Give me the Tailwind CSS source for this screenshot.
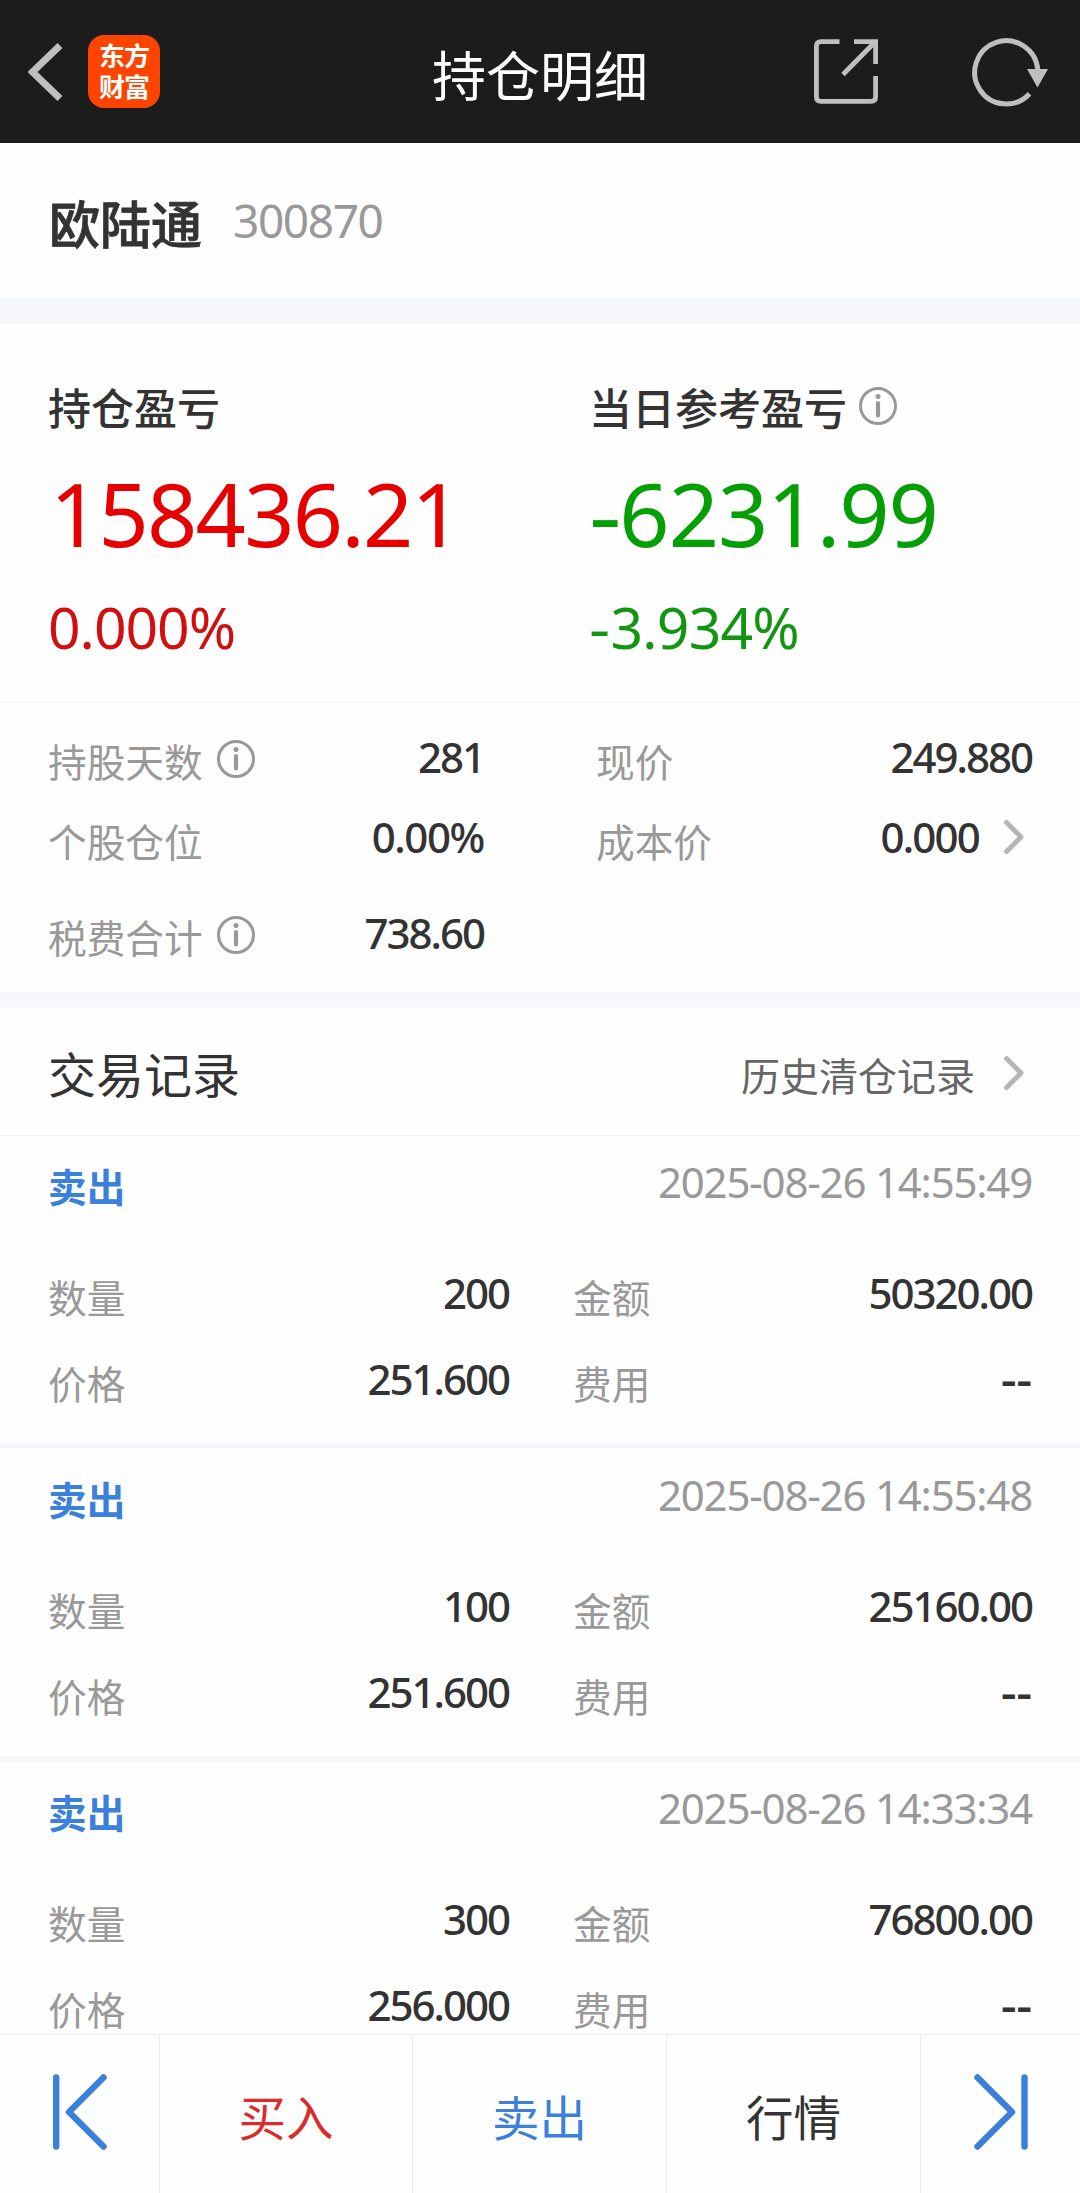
<!DOCTYPE html>
<html lang="zh-CN">
<head>
  <meta charset="UTF-8" />
  <meta name="viewport" content="width=device-width, initial-scale=1.0" />
  <title>持仓明细</title>
  <script src="https://cdn.jsdelivr.net/npm/@tailwindcss/browser@4"></script>
</head>
<body class="bg-[#fefefe] h-[2193px] flex flex-col overflow-hidden text-[#333333] font-['Noto_Sans_CJK_SC',sans-serif] leading-none">

  <!-- shared icons -->
  <svg class="hidden">
    <symbol id="info" viewBox="0 0 38 38">
      <circle cx="19" cy="19" r="17.5" fill="none" stroke="#999999" stroke-width="3" />
      <circle cx="19" cy="9.4" r="2.5" fill="#999999" />
      <path d="M19 16v12.5" stroke="#999999" stroke-width="4.2" stroke-linecap="round" />
    </symbol>
    <symbol id="arrow" viewBox="0 0 20 34">
      <path d="M2.6 2.6L17 17L2.6 31.4" fill="none" stroke="#b5b5b5" stroke-width="5" stroke-linecap="round" stroke-linejoin="round" />
    </symbol>
  </svg>

  <!-- top bar -->
  <header class="bg-[#1c1c1c] h-[143px] shrink-0 grid grid-cols-[1fr_auto_1fr] items-center pl-7 pr-8">
    <div class="flex items-center">
      <svg class="w-9 h-[58px]" viewBox="0 0 36 58"><path d="M32 2.5L4.5 29L32 55.5" fill="none" stroke="#bfbfbf" stroke-width="7" stroke-linejoin="miter" /></svg>
      <div class="ml-6 w-[72px] h-[73px] rounded-2xl bg-[#ff4400] text-white text-[26px] font-bold leading-[31px] text-center pt-[4px] tracking-[-1px]">东方<br>财富</div>
    </div>
    <h1 class="text-white text-[54px] pt-[5px] pl-[4px]">持仓明细</h1>
    <div class="flex items-center justify-end">
      <svg class="w-16 h-[65px] mr-[94px]" viewBox="0 0 64 65" fill="none" stroke="#bfbfbf" stroke-width="4.8">
        <path d="M25.5 2.7H7Q2.4 2.7 2.4 7V58Q2.4 62.3 7 62.3H57Q61.6 62.3 61.6 58V37" />
        <path d="M40 2.7H61.6V25M61 3L29 35.5" />
      </svg>
      <svg class="w-[76px] h-[70px]" viewBox="0 0 76 70">
        <path d="M57.5 56.8A31.6 31.6 0 1 1 65.8 33" fill="none" stroke="#bfbfbf" stroke-width="5" />
        <path d="M55 32H76L65.5 50.5Z" fill="#bfbfbf" />
      </svg>
    </div>
  </header>

  <!-- stock name -->
  <section class="h-[155px] shrink-0 flex items-center px-[49px]">
    <h2 class="text-[51px] font-medium pt-[3px] [-webkit-text-stroke:0.8px]">欧陆通</h2>
    <span class="ml-[31px] text-[46px] text-[#999999] font-['Noto_Sans',sans-serif] tracking-[-1.4px] pb-[1px]">300870</span>
  </section>
  <div class="h-[26px] shrink-0 bg-[#f6f7fa]"></div>

  <!-- profit and loss -->
  <section class="h-[379px] shrink-0 grid grid-cols-2 pl-[48px] border-b border-[#f5f5f5]">
    <div class="pt-[60px]">
      <div class="h-[44px] flex items-center text-[43px] font-medium">持仓盈亏</div>
      <div class="mt-[41px] pl-[2px] text-[88px] text-[#e60000] font-['Noto_Sans',sans-serif] tracking-[-1.8px]">158436.21</div>
      <div class="mt-[42px] text-[57px] text-[#d20f0f] font-['Noto_Sans',sans-serif] tracking-[-1px]">0.000%</div>
    </div>
    <div class="pt-[60px] pl-[25px]">
      <div class="h-[44px] flex items-center text-[43px] font-medium">当日参考盈亏
        <svg class="w-[38px] h-[38px] ml-3"><use href="#info" /></svg>
      </div>
      <div class="mt-[41px] text-[88px] text-[#049f04] font-['Noto_Sans',sans-serif] tracking-[-1px]"><span class="inline-block origin-left scale-x-115 mr-[3px]">-</span>6231.99</div>
      <div class="mt-[42px] text-[57px] text-[#129612] font-['Noto_Sans',sans-serif] tracking-[-0.8px]"><span class="inline-block origin-left scale-x-115 mr-[4px]">-</span>3.934%</div>
    </div>
  </section>

  <!-- position details -->
  <section class="h-[288px] shrink-0 pt-4 pl-[48px] pr-[48px] grid grid-cols-[436px_1fr] grid-rows-[82px_78px_112px] gap-x-28 text-[38.7px] text-[#999999]">
    <div class="flex items-center">
      <span>持股天数</span>
      <svg class="w-[38px] h-[38px] ml-[14px] mb-[2px]"><use href="#info" /></svg>
      <span class="ml-auto pb-1.5 text-[42px] text-[#333333] font-medium font-['Noto_Sans',sans-serif] tracking-[-2px]">281</span>
    </div>
    <div class="flex items-center justify-between">
      <span>现价</span>
      <span class="pb-1.5 text-[42px] text-[#333333] font-medium font-['Noto_Sans',sans-serif] tracking-[-2px]">249.880</span>
    </div>
    <div class="flex items-center justify-between">
      <span>个股仓位</span>
      <span class="pb-1.5 text-[42px] text-[#333333] font-medium font-['Noto_Sans',sans-serif] tracking-[-1.4px]">0.00%</span>
    </div>
    <div class="flex items-center">
      <span>成本价</span>
      <span class="ml-auto pb-1.5 text-[42px] text-[#333333] font-medium font-['Noto_Sans',sans-serif] tracking-[-1.8px]">0.000</span>
      <svg class="w-5 h-[34px] ml-[25px] mr-[8px] mb-[7px]"><use href="#arrow" /></svg>
    </div>
    <div class="flex items-center">
      <span class="pt-[2px]">税费合计</span>
      <svg class="w-[38px] h-[38px] ml-[14px]"><use href="#info" /></svg>
      <span class="ml-auto pb-1 text-[42px] text-[#333333] font-medium font-['Noto_Sans',sans-serif] tracking-[-2px]">738.60</span>
    </div>
  </section>
  <div class="h-4 shrink-0 bg-[#f6f7fa]"></div>

  <!-- trade records -->
  <div class="h-[129px] shrink-0 flex items-center pl-[48px] pr-[56px] border-b border-[#f5f5f5]">
    <h3 class="text-[48px] pt-[2px]">交易记录</h3>
    <span class="ml-auto text-[39px] text-[#666666] pt-[6px]">历史清仓记录</span>
    <svg class="w-5 h-[34px] ml-[29px] mt-[3px]"><use href="#arrow" /></svg>
  </div>

  <main class="flex-1 min-h-0 overflow-hidden">
    <article class="h-[313px] border-b-6 border-[#f6f7fa]">
      <div class="h-[97px] flex items-center justify-between pl-[48px] pr-[48px] border-b border-[#f7f7f7]">
        <span class="text-[38.7px] font-bold text-[#3b80da] pt-[3px]">卖出</span>
        <span class="text-[42px] text-[#999999] font-['Noto_Sans',sans-serif] tracking-[-1.2px] pb-[4px]">2025-08-26 14:55:49</span>
      </div>
      <div class="pt-[20px] pl-[48px] pr-[48px] grid grid-cols-[461px_1fr] auto-rows-[86px] gap-x-[64px] text-[38.7px] text-[#999999]">
        <div class="flex items-center justify-between">数量<span class="pb-1.5 text-[42px] text-[#333333] font-medium font-['Noto_Sans',sans-serif] tracking-[-2px]">200</span></div>
        <div class="flex items-center justify-between">金额<span class="pb-1.5 text-[42px] text-[#333333] font-medium font-['Noto_Sans',sans-serif] tracking-[-2px]">50320.00</span></div>
        <div class="flex items-center justify-between">价格<span class="pb-1.5 text-[42px] text-[#333333] font-medium font-['Noto_Sans',sans-serif] tracking-[-2px]">251.600</span></div>
        <div class="flex items-center justify-between">费用<span class="pb-1.5 text-[42px] text-[#333333] font-semibold font-['Noto_Sans',sans-serif] origin-right scale-x-115">--</span></div>
      </div>
    </article>

    <article class="h-[313px] border-b-6 border-[#f6f7fa]">
      <div class="h-[97px] flex items-center justify-between pl-[48px] pr-[48px] border-b border-[#f7f7f7]">
        <span class="text-[38.7px] font-bold text-[#3b80da] pt-[3px]">卖出</span>
        <span class="text-[42px] text-[#999999] font-['Noto_Sans',sans-serif] tracking-[-1.2px] pb-[4px]">2025-08-26 14:55:48</span>
      </div>
      <div class="pt-[20px] pl-[48px] pr-[48px] grid grid-cols-[461px_1fr] auto-rows-[86px] gap-x-[64px] text-[38.7px] text-[#999999]">
        <div class="flex items-center justify-between">数量<span class="pb-1.5 text-[42px] text-[#333333] font-medium font-['Noto_Sans',sans-serif] tracking-[-2px]">100</span></div>
        <div class="flex items-center justify-between">金额<span class="pb-1.5 text-[42px] text-[#333333] font-medium font-['Noto_Sans',sans-serif] tracking-[-2px]">25160.00</span></div>
        <div class="flex items-center justify-between">价格<span class="pb-1.5 text-[42px] text-[#333333] font-medium font-['Noto_Sans',sans-serif] tracking-[-2px]">251.600</span></div>
        <div class="flex items-center justify-between">费用<span class="pb-1.5 text-[42px] text-[#333333] font-semibold font-['Noto_Sans',sans-serif] origin-right scale-x-115">--</span></div>
      </div>
    </article>

    <article class="h-[313px] border-b-6 border-[#f6f7fa]">
      <div class="h-[97px] flex items-center justify-between pl-[48px] pr-[48px] border-b border-[#f7f7f7]">
        <span class="text-[38.7px] font-bold text-[#3b80da] pt-[3px]">卖出</span>
        <span class="text-[42px] text-[#999999] font-['Noto_Sans',sans-serif] tracking-[-1.2px] pb-[4px]">2025-08-26 14:33:34</span>
      </div>
      <div class="pt-[20px] pl-[48px] pr-[48px] grid grid-cols-[461px_1fr] auto-rows-[86px] gap-x-[64px] text-[38.7px] text-[#999999]">
        <div class="flex items-center justify-between">数量<span class="pb-1.5 text-[42px] text-[#333333] font-medium font-['Noto_Sans',sans-serif] tracking-[-2px]">300</span></div>
        <div class="flex items-center justify-between">金额<span class="pb-1.5 text-[42px] text-[#333333] font-medium font-['Noto_Sans',sans-serif] tracking-[-2px]">76800.00</span></div>
        <div class="flex items-center justify-between">价格<span class="pb-1.5 text-[42px] text-[#333333] font-medium font-['Noto_Sans',sans-serif] tracking-[-2px]">256.000</span></div>
        <div class="flex items-center justify-between">费用<span class="pb-1.5 text-[42px] text-[#333333] font-semibold font-['Noto_Sans',sans-serif] origin-right scale-x-115">--</span></div>
      </div>
    </article>
  </main>

  <!-- bottom bar -->
  <nav class="h-[159px] shrink-0 grid grid-cols-[160px_253px_254px_254px_159px] border-t border-[#ececec] bg-[#fefefe] text-[47.5px]">
    <button class="flex items-center justify-center border-r border-[#ececec] pb-1">
      <svg class="w-[54px] h-[76px]" viewBox="0 0 54 76" fill="none" stroke="#3b80da" stroke-width="6.4" stroke-linecap="round" stroke-linejoin="round">
        <path d="M3.2 3.5V72.5M50.5 3.5L16 38L50.5 72.5" />
      </svg>
    </button>
    <button class="border-r border-[#ececec] text-[#dc2b2b] pt-[4px]">买入</button>
    <button class="border-r border-[#ececec] text-[#3b80da] pt-[4px]">卖出</button>
    <button class="border-r border-[#ececec] pt-[4px]">行情</button>
    <button class="flex items-center justify-center pb-1">
      <svg class="w-[54px] h-[76px]" viewBox="0 0 54 76" fill="none" stroke="#3b80da" stroke-width="6.4" stroke-linecap="round" stroke-linejoin="round">
        <path d="M50.5 3.5V72.5M3.5 3.5L38 38L3.5 72.5" />
      </svg>
    </button>
  </nav>

</body>
</html>
